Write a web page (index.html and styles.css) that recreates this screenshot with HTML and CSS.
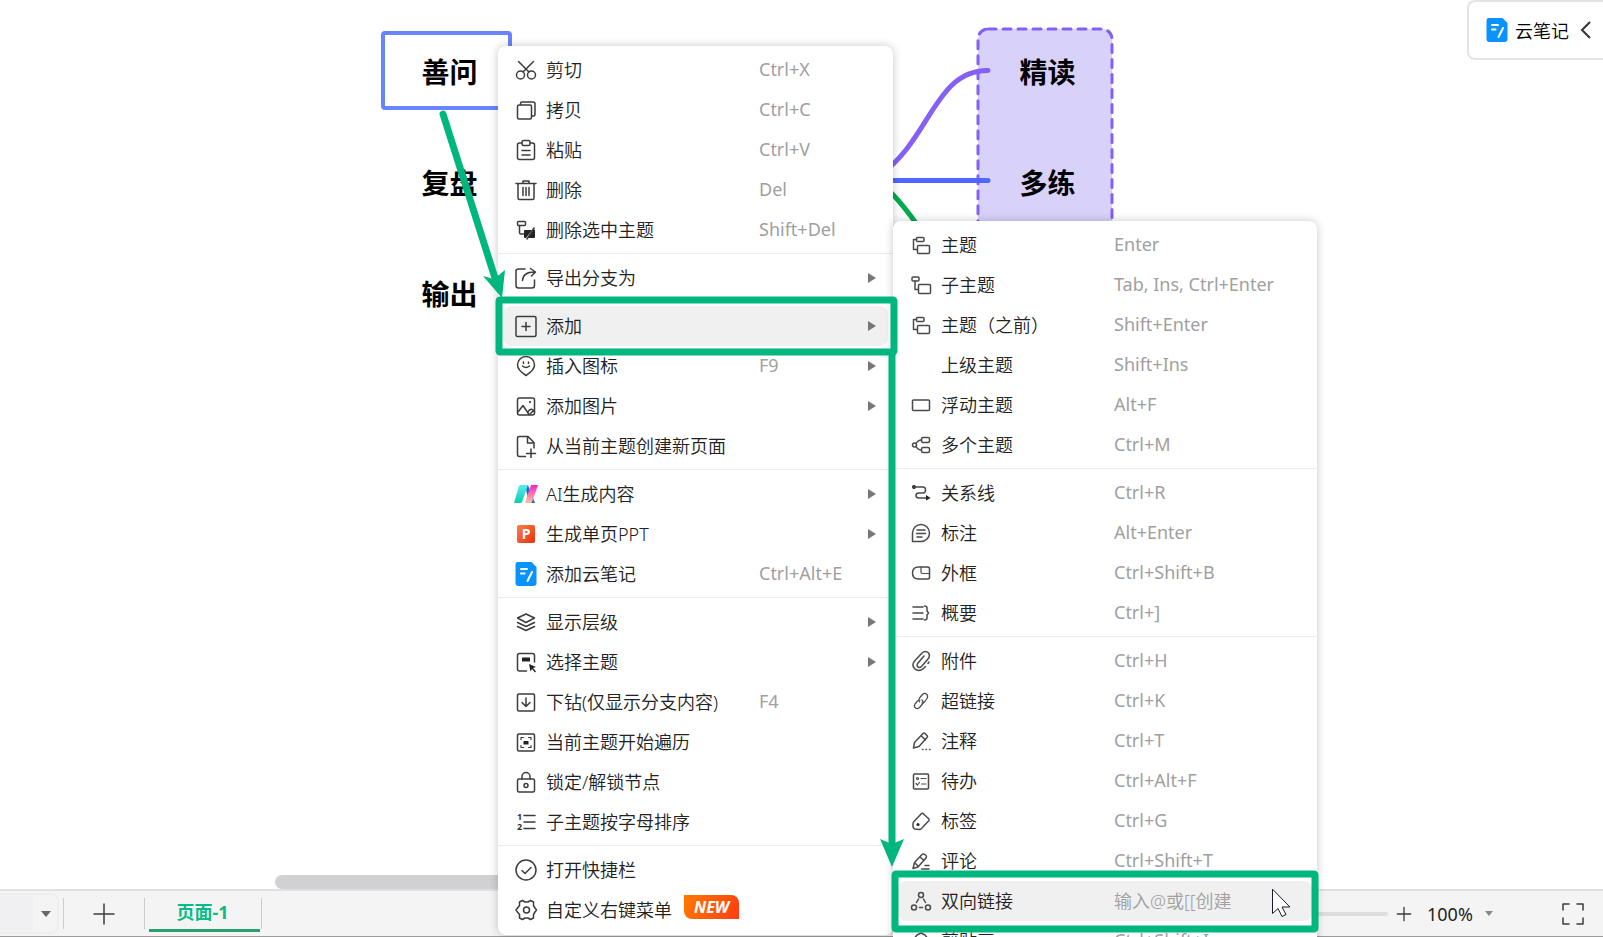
FILE: index.html
```html
<!DOCTYPE html>
<html lang="zh-CN">
<head>
    <meta charset="UTF-8">
    <meta name="viewport" content="width=device-width, initial-scale=1.0">
    <title>思维导图</title>
    <link rel="stylesheet" href="styles.css">
</head>
<body>
    <!-- Iconos -->
    <svg class="sprite" aria-hidden="true">
        <symbol id="i-cut" viewBox="0 0 24 24"><circle cx="6.500" cy="17" r="4"/><circle cx="17.500" cy="17" r="4"/><path d="M4.500 3.500L15 14M19.500 3.500L9 14"/></symbol>
        <symbol id="i-copy" viewBox="0 0 24 24"><rect x="3.500" y="7" width="14" height="14" rx="1.500"/><path d="M6.500 6.500V5.500q0-1.500 1.500-1.500h11q2 0 2 2v10.500q0 1.500-1.500 1.500h-1.500"/></symbol>
        <symbol id="i-paste" viewBox="0 0 24 24"><path d="M8 5H5.500q-2 0-2 2v12.500q0 2 2 2h13q2 0 2-2V7q0-2-2-2H16"/><rect x="8" y="2.500" width="8" height="5" rx="1.500"/><path d="M8 12.500h8M8 17h8"/></symbol>
        <symbol id="i-trash" viewBox="0 0 24 24"><path d="M2 5.500h20M4 5.500V20q0 1.500 1.500 1.500h13q1.500 0 1.500-1.500V5.500M9 5.500V3h6v2.500M9 9.500v8M12 9.500v8M15 9.500v8"/></symbol>
        <symbol id="i-deltopic" viewBox="0 0 24 24"><rect x="3.500" y="3.500" width="8" height="4" rx="1"/><path d="M5.500 7.500v7q0 1.500 1.500 1.500h3"/><path class="solid" d="M11 12h7l-6 8h-1q-1 0-1-1v-6q0-1 1-1zM20 11l-6 9h6q1 0 1-1v-7z"/><path d="M13 21l7-11"/></symbol>
        <symbol id="i-export" viewBox="0 0 24 24"><path d="M11 3H4.500Q2 3 2 5v14.500Q2 22 4.500 22H18q2.500 0 2.500-2.500V14M8.500 14.500Q9 6 20.500 6M16.500 2.500L21.500 6l-4 4"/></symbol>
        <symbol id="i-add" viewBox="0 0 24 24"><rect x="2" y="2.500" width="20" height="20" rx="1.500"/><path d="M12 8.500v8M8 12.500h8"/></symbol>
        <symbol id="i-marker" viewBox="0 0 24 24"><path d="M12 21.500Q3.500 16 3.500 11a8.500 8.500 0 0 1 17 0q0 5-8.500 10.500z"/><path d="M9.500 8v1.500M14.500 8v1.500M8.500 12q3.500 3 7 0"/></symbol>
        <symbol id="i-image" viewBox="0 0 24 24"><rect x="3.500" y="4" width="17" height="17" rx="2"/><path d="M4 18l5-6.500 6 9M14 18q2-4 5-2l1.500 2M16 20l3-3"/><circle class="solid" cx="16" cy="8" r="1"/></symbol>
        <symbol id="i-newpage" viewBox="0 0 24 24"><path d="M11.500 22.500H5.500q-2 0-2-2V4q0-1.500 2-1.500H14l6 6V14M13.500 3v6h6M17 15v9M12.500 19.500h9"/></symbol>
        <symbol id="i-ai" viewBox="0 0 24 24"><path fill="#1673c8" stroke="none" d="M11 3h3l7 18h-6z"/><path fill="url(#g-teal)" stroke="none" d="M6 3h8L8 20q-.5 1-2 1H0L5 4z"/><path fill="url(#g-pink)" stroke="none" d="M17 3h7l-6 17q-.5 1-2 1h-5z"/></symbol>
        <symbol id="i-note" viewBox="0 0 24 24"><path fill="#0a93ff" stroke="none" d="M3.500 0h14L22.500 5v16q0 3-3 3H4.500q-3 0-3-3V3q0-3 2-3z"/><path class="white" d="M7 7h6M7 11.500h3.500M18 10L13.500 19"/></symbol>
        <symbol id="i-layers" viewBox="0 0 24 24"><path d="M12 4l8.500 4-8.500 4.500L3.500 8zM3.500 12.500l8.500 4 8.500-4M3.500 16.500l8.500 4 8.500-4"/></symbol>
        <symbol id="i-select" viewBox="0 0 24 24"><path d="M12.500 21H5.500q-2 0-2-2V5.500q0-2 2-2h13q2 0 2 2V12"/><path class="solid" d="M8 7.500h8v4H8zM15 14l7 3-3 1 3 3.500-1 1-3-3.500-1.500 2.500z"/></symbol>
        <symbol id="i-drill" viewBox="0 0 24 24"><rect x="3.500" y="4" width="17" height="17" rx="1.500"/><path d="M12 8v8.500M8 12.500l4 4 4-4"/></symbol>
        <symbol id="i-walk" viewBox="0 0 24 24"><rect x="3.500" y="4" width="17" height="17" rx="1.500"/><path class="thin" d="M7 9.500V7.500h2.500M17 9.500V7.500h-2.500M7 15.500v2h2.500M17 15.500v2h-2.500"/><path class="solid" d="M9.500 11h5v3.500h-5z"/></symbol>
        <symbol id="i-lock" viewBox="0 0 24 24"><rect x="3.500" y="9" width="17" height="13" rx="1.500"/><path d="M8 9V6.500a4 4 0 0 1 8 0V9"/><circle cx="12" cy="15.500" r="2"/></symbol>
        <symbol id="i-check" viewBox="0 0 24 24"><circle cx="12" cy="12" r="10"/><path d="M8 12.500l3 3 6-6"/></symbol>
        <symbol id="i-gear" viewBox="0 0 24 24"><path d="M8.500 2.500l2.500 1.500h3l2.500-1.500 3 1.500v3.500l1.500 2.500 1.500 2-1.500 2-1.500 2.500V20l-3 1.500-2.500-1.500h-3l-2.500 1.500-3-1.500v-3.500L3.500 14 2 12l1.500-2L5.500 7.500V4z"/><circle cx="12.500" cy="12" r="3"/></symbol>
        <symbol id="i-topic" viewBox="0 0 24 24"><path d="M7.500 6.500H4.500v10H8"/><rect x="7.500" y="4.500" width="7.500" height="4" rx="1"/><rect x="8.500" y="12.500" width="12" height="8" rx="1"/></symbol>
        <symbol id="i-subtopic" viewBox="0 0 24 24"><rect x="3" y="4" width="7" height="4" rx="1"/><path d="M6 8v8.500h3"/><rect x="9.500" y="11.500" width="12" height="9" rx="1"/></symbol>
        <symbol id="i-float" viewBox="0 0 24 24"><rect x="3.500" y="7" width="17" height="10.500" rx="1"/></symbol>
        <symbol id="i-multi" viewBox="0 0 24 24"><circle cx="5.500" cy="12" r="2"/><rect x="12.500" y="4.500" width="8" height="5" rx="1.500"/><rect x="12.500" y="14.500" width="8" height="5" rx="1.500"/><path d="M7 10.500Q9 7 12.500 7M7 13.500Q9 17 12.500 17"/></symbol>
        <symbol id="i-relation" viewBox="0 0 24 24"><circle class="solid" cx="5" cy="6" r="2"/><path d="M4.500 6H14q2.500 0 2.500 3t-2.500 3H10q-3 0-3 2.500T10 17h9"/><path class="solid" d="M17 14l4.500 3-4.500 2.500z"/></symbol>
        <symbol id="i-callout" viewBox="0 0 24 24"><path d="M3.500 20.500V12a8.500 8.500 0 1 1 8.500 8.500zM8 9h8M7.500 12.500h9M8 16h5"/></symbol>
        <symbol id="i-boundary" viewBox="0 0 24 24"><path d="M9.500 6H18q2.500 0 2.500 1.500v9q0 1.500-2.500 1.500H9.500q-6 0-6-6t6-6z"/><path class="thin" d="M12 6v5q0 1.500 1.500 1.500h7"/></symbol>
        <symbol id="i-summary" viewBox="0 0 24 24"><path d="M4 6h10M4 12h10M4 18h10M15.500 5q2.500 0 2.500 2v3l1.500 2-1.500 2v3q0 2-2.500 2"/></symbol>
        <symbol id="i-clip" viewBox="0 0 24 24"><path d="M20 13l-1 1.500M16.500 17.500l-2 2q-5 4-9 0-3.500-4 .5-8l7-7.500q3.500-3 6.500 0 2 3-.500 6l-6.500 7.500q-2 2-4 0-1-1.500.5-3.500l6-7"/></symbol>
        <symbol id="i-link" viewBox="0 0 24 24"><path class="thin" d="M10.500 13q-1.500-2 0-4l3-3.500q2-2 4-.5t.500 4.500l-2.500 3.500q-1 1-2.500 1"/><path class="thin" d="M13 11q2 2 .5 4l-3 3.500q-2 2-4 .5t-.5-4l2.500-3q1-1 2.500-1"/></symbol>
        <symbol id="i-pen" viewBox="0 0 24 24"><path d="M4.500 19l1-5.500 8.500-9q1-1 2 0l2 2q1 1 0 2L10 17.500zM12.500 7l4 4M13.500 20.500h.5M17 20.500h.5M20.500 20.500h.5"/></symbol>
        <symbol id="i-todo" viewBox="0 0 24 24"><rect x="4.500" y="5" width="15" height="15" rx="1"/><circle class="thin" cx="8.500" cy="9.500" r="1"/><path class="thin" d="M12 9.500h5M7 14.500l1.500 1.500 2-2.500M12.500 15H17"/></symbol>
        <symbol id="i-tag" viewBox="0 0 24 24"><path d="M14 4.500l6 5.500q.5 1-.5 2L12.500 19.500q-1 1-2 1L6 20q-1.500-.5-2-2v-3q0-1 .5-2l8-8.500q.5-.5 1.500 0z"/><circle class="solid" cx="9" cy="15.500" r="1.500"/></symbol>
        <symbol id="i-comment" viewBox="0 0 24 24"><path d="M4 19.500l1.500-6L13 5.500q1.500-1 3.500.5t0 3.500L9 18zM11 8l4 3.500M5.500 13.500l3.500 3.500M16 16.500h4M12.500 20h7.500"/></symbol>
        <symbol id="i-bilink" viewBox="0 0 24 24"><circle cx="12" cy="6" r="2.500"/><circle cx="5" cy="18.500" r="2.500"/><circle cx="19" cy="18.500" r="2.500"/><path d="M9.500 10L7.500 13.500M14.500 10l2 3.500M10.500 18.500h3"/></symbol>
        <symbol id="i-clipart" viewBox="0 0 24 24"><path d="M4 11l4-5 4-2 4 2 4 5-4 2v7H8v-7z"/></symbol>
        <symbol id="i-plus" viewBox="0 0 24 24"><path d="M12 2v20M2 12h20"/></symbol>
        <symbol id="i-full" viewBox="0 0 24 24"><path d="M2 8V2h6M16 2h6v6M2 16v6h6M16 22h6v-6"/></symbol>
        <linearGradient id="g-teal" x1="0" y1="0" x2="0" y2="1"><stop offset="0" stop-color="#5cebf2"/><stop offset="1" stop-color="#06cfa9"/></linearGradient>
        <linearGradient id="g-pink" x1="0" y1="0" x2="0" y2="1"><stop offset="0" stop-color="#ff1fc7"/><stop offset="1" stop-color="#ffc59a"/></linearGradient>
        <linearGradient id="g-ppt" x1="0" y1="0" x2="1" y2="1"><stop offset="0" stop-color="#ff7d4d"/><stop offset="1" stop-color="#e73208"/></linearGradient>
    </svg>

    <main class="canvas">
        <svg class="wires" aria-hidden="true">
            <rect x="978" y="29" width="134" height="300" rx="10" fill="#d8d1f9" stroke="#8560f5" stroke-width="3" stroke-dasharray="8 7" stroke-linecap="round"/>
            <path d="M880 175C930 140 935 70 988 70.500" stroke="#8560f5"/>
            <path d="M880 180.500H988" stroke="#4f66ff"/>
            <path d="M880 184Q895 192 925 236" stroke="#00aa4f"/>
        </svg>
        <div class="topics topics-left">
            <div class="topic selected">善问</div>
            <div class="topic">复盘</div>
            <div class="topic">输出</div>
        </div>
        <div class="topics topics-right">
            <div class="topic">精读</div>
            <div class="topic">多练</div>
        </div>
        <button class="cloud-note"><svg class="icon"><use href="#i-note"/></svg><span>云笔记</span><svg class="chevron" viewBox="0 0 10 16"><path d="M9 0L1 8l8 8"/></svg></button>
        <div class="scrollbar"></div>
    </main>

    <footer class="statusbar">
        <button class="page-list" aria-label="页面列表"><span class="page-list-fill"></span><span class="caret"></span></button>
        <button class="page-add" aria-label="新建页面"><svg class="icon"><use href="#i-plus"/></svg></button>
        <button class="page-tab"><span>页面-1</span></button>
        <div class="zoom">
            <input class="zoom-range" type="range" min="0" max="100" value="20" aria-label="缩放">
            <button class="zoom-in" aria-label="放大"><svg class="icon"><use href="#i-plus"/></svg></button>
            <select class="zoom-select" aria-label="缩放比例"><option>100%</option></select>
            <span class="caret caret-small"></span>
            <button class="fullscreen" aria-label="全屏"><svg class="icon"><use href="#i-full"/></svg></button>
        </div>
    </footer>

    <!-- Menú contextual -->
    <nav class="menu menu-main">
        <button class="item"><svg class="icon"><use href="#i-cut"/></svg><span class="label">剪切</span><kbd>Ctrl+X</kbd></button>
        <button class="item"><svg class="icon"><use href="#i-copy"/></svg><span class="label">拷贝</span><kbd>Ctrl+C</kbd></button>
        <button class="item"><svg class="icon"><use href="#i-paste"/></svg><span class="label">粘贴</span><kbd>Ctrl+V</kbd></button>
        <button class="item"><svg class="icon"><use href="#i-trash"/></svg><span class="label">删除</span><kbd>Del</kbd></button>
        <button class="item"><svg class="icon"><use href="#i-deltopic"/></svg><span class="label">删除选中主题</span><kbd>Shift+Del</kbd></button>
        <hr>
        <button class="item has-sub"><svg class="icon"><use href="#i-export"/></svg><span class="label">导出分支为</span></button>
        <hr>
        <button class="item has-sub active"><svg class="icon"><use href="#i-add"/></svg><span class="label">添加</span></button>
        <button class="item has-sub"><svg class="icon"><use href="#i-marker"/></svg><span class="label">插入图标</span><kbd>F9</kbd></button>
        <button class="item has-sub"><svg class="icon"><use href="#i-image"/></svg><span class="label">添加图片</span></button>
        <button class="item"><svg class="icon"><use href="#i-newpage"/></svg><span class="label">从当前主题创建新页面</span></button>
        <hr>
        <button class="item has-sub"><svg class="icon"><use href="#i-ai"/></svg><span class="label">AI生成内容</span></button>
        <button class="item has-sub"><svg class="icon" viewBox="0 0 24 24"><rect x="3" y="3" width="18" height="18" rx="2" fill="url(#g-ppt)" stroke="none"/><text class="ppt-letter" x="12" y="17" text-anchor="middle">P</text></svg><span class="label">生成单页PPT</span></button>
        <button class="item"><svg class="icon"><use href="#i-note"/></svg><span class="label">添加云笔记</span><kbd>Ctrl+Alt+E</kbd></button>
        <hr>
        <button class="item has-sub"><svg class="icon"><use href="#i-layers"/></svg><span class="label">显示层级</span></button>
        <button class="item has-sub"><svg class="icon"><use href="#i-select"/></svg><span class="label">选择主题</span></button>
        <button class="item"><svg class="icon"><use href="#i-drill"/></svg><span class="label">下钻(仅显示分支内容)</span><kbd>F4</kbd></button>
        <button class="item"><svg class="icon"><use href="#i-walk"/></svg><span class="label">当前主题开始遍历</span></button>
        <button class="item"><svg class="icon"><use href="#i-lock"/></svg><span class="label">锁定/解锁节点</span></button>
        <button class="item"><svg class="icon" viewBox="0 0 24 24"><path d="M10 5.500h11M10 12h11M10 18.500h11"/><text class="sort-digit" x="3" y="10">1</text><text class="sort-digit" x="3" y="20">2</text></svg><span class="label">子主题按字母排序</span></button>
        <hr>
        <button class="item"><svg class="icon"><use href="#i-check"/></svg><span class="label">打开快捷栏</span></button>
        <button class="item"><svg class="icon"><use href="#i-gear"/></svg><span class="label">自定义右键菜单<b class="badge">NEW</b></span></button>
    </nav>

    <!-- Submenú "添加" -->
    <nav class="menu menu-sub">
        <button class="item"><svg class="icon"><use href="#i-topic"/></svg><span class="label">主题</span><kbd>Enter</kbd></button>
        <button class="item"><svg class="icon"><use href="#i-subtopic"/></svg><span class="label">子主题</span><kbd>Tab, Ins, Ctrl+Enter</kbd></button>
        <button class="item"><svg class="icon"><use href="#i-topic"/></svg><span class="label">主题（之前）</span><kbd>Shift+Enter</kbd></button>
        <button class="item"><span class="icon"></span><span class="label">上级主题</span><kbd>Shift+Ins</kbd></button>
        <button class="item"><svg class="icon"><use href="#i-float"/></svg><span class="label">浮动主题</span><kbd>Alt+F</kbd></button>
        <button class="item"><svg class="icon"><use href="#i-multi"/></svg><span class="label">多个主题</span><kbd>Ctrl+M</kbd></button>
        <hr>
        <button class="item"><svg class="icon"><use href="#i-relation"/></svg><span class="label">关系线</span><kbd>Ctrl+R</kbd></button>
        <button class="item"><svg class="icon"><use href="#i-callout"/></svg><span class="label">标注</span><kbd>Alt+Enter</kbd></button>
        <button class="item"><svg class="icon"><use href="#i-boundary"/></svg><span class="label">外框</span><kbd>Ctrl+Shift+B</kbd></button>
        <button class="item"><svg class="icon"><use href="#i-summary"/></svg><span class="label">概要</span><kbd>Ctrl+]</kbd></button>
        <hr>
        <button class="item"><svg class="icon"><use href="#i-clip"/></svg><span class="label">附件</span><kbd>Ctrl+H</kbd></button>
        <button class="item"><svg class="icon"><use href="#i-link"/></svg><span class="label">超链接</span><kbd>Ctrl+K</kbd></button>
        <button class="item"><svg class="icon"><use href="#i-pen"/></svg><span class="label">注释</span><kbd>Ctrl+T</kbd></button>
        <button class="item"><svg class="icon"><use href="#i-todo"/></svg><span class="label">待办</span><kbd>Ctrl+Alt+F</kbd></button>
        <button class="item"><svg class="icon"><use href="#i-tag"/></svg><span class="label">标签</span><kbd>Ctrl+G</kbd></button>
        <button class="item"><svg class="icon"><use href="#i-comment"/></svg><span class="label">评论</span><kbd>Ctrl+Shift+T</kbd></button>
        <button class="item active"><svg class="icon"><use href="#i-bilink"/></svg><span class="label">双向链接</span><kbd>输入@或[[创建</kbd></button>
        <button class="item"><svg class="icon"><use href="#i-clipart"/></svg><span class="label">剪贴画</span><kbd>Ctrl+Shift+I</kbd></button>
    </nav>

    <!-- Marcas verdes y cursor -->
    <svg class="marks" aria-hidden="true">
        <rect x="499" y="300" width="395" height="52" rx="1"/>
        <rect x="895" y="874" width="420" height="55" rx="1"/>
        <path d="M443 114L495 278M892 354V845"/>
        <path class="head" d="M483 276l11 3 11-9-3 28zM880 839l12 5 12-5-12 28z"/>
        <path class="cursor" d="M1272.500 889.500v24l5.500-5 4 8 4-2-4-7.500h7.500z"/>
    </svg>
</body>
</html>
```
FILE: styles.css
```css
* {
    box-sizing: border-box;
}
body {
    display: flex;
    flex-direction: column;
    height: 100vh;
    margin: 0;
    overflow: hidden;
    position: relative;
    background-color: #fff;
    color: #222;
    font-family: "Noto Sans", "Noto Sans CJK SC", sans-serif;
    font-size: 18px;
    font-weight: 350;
}
button, select {
    margin: 0;
    padding: 0;
    border: none;
    background: none;
    color: inherit;
    font: inherit;
}
.sprite {
    position: absolute;
    width: 0;
    height: 0;
}
.icon {
    flex: none;
    width: 24px;
    height: 24px;
    fill: none;
    stroke: #3c3c3c;
    stroke-width: 1.5;
    stroke-linecap: round;
    stroke-linejoin: round;
}
.solid {
    fill: #222;
    stroke: none;
}
.thin {
    stroke-width: 1.2;
}
.white {
    stroke: #fff;
    stroke-width: 2;
}
.ppt-letter {
    fill: #fff;
    stroke: none;
    font-size: 14px;
    font-weight: 700;
}
.sort-digit {
    fill: #333;
    stroke: none;
    font-size: 9px;
    font-weight: 700;
}

/* Lienzo */
.canvas {
    flex: 1;
    position: relative;
    display: flex;
    flex-direction: column;
    justify-content: space-between;
    align-items: flex-end;
}
.wires, .marks {
    position: absolute;
    top: 0;
    left: 0;
    width: 100%;
    height: 100%;
    fill: none;
    stroke-width: 5;
    stroke-linecap: round;
    pointer-events: none;
}
.topics {
    position: absolute;
    top: 31px;
    display: flex;
    flex-direction: column;
    gap: 32px;
}
.topics-left {
    left: 381px;
}
.topics-right {
    left: 979px;
}
.topic {
    width: 131px;
    height: 79px;
    padding: 0 4px 0 10px;
    border: 4px solid transparent;
    border-radius: 4px;
    color: #000;
    font-size: 28px;
    font-weight: 700;
    line-height: 74px;
    text-align: center;
}
.selected {
    border-color: #6984ff;
}
.cloud-note {
    position: relative;
    display: flex;
    align-items: center;
    gap: 6px;
    height: 60px;
    padding: 0 12px 0 16px;
    border: 2px solid #e4e4e4;
    border-right: none;
    border-radius: 8px 0 0 8px;
    background-color: #fff;
    color: #000;
}
.chevron {
    width: 10px;
    height: 16px;
    margin-left: 6px;
    overflow: visible;
    fill: none;
    stroke: #333;
    stroke-width: 2;
}
.scrollbar {
    align-self: stretch;
    height: 14px;
    margin: 0 300px 0 275px;
    border-radius: 7px;
    background-color: #d1d1d3;
}

/* Barra inferior */
.statusbar {
    display: flex;
    align-items: center;
    height: 48px;
    border-top: 2px solid #e0e0e0;
    border-bottom: 1px solid #9c9c9c;
    background-color: #f4f4f4;
}
.page-list {
    display: flex;
    align-items: center;
    gap: 8px;
    width: 59px;
    height: 41px;
    margin-right: 4px;
    border: 2px solid #eee;
    border-left: none;
    border-radius: 0 8px 8px 0;
}
.page-list-fill {
    width: 33px;
    height: 35px;
    background-color: #f0f0f2;
}
.caret {
    border: 5px solid transparent;
    border-top: 6px solid #666;
    border-bottom: none;
}
.caret-small {
    border-width: 5px 4px 0;
    border-top-color: #888;
}
.page-add {
    display: flex;
    align-items: center;
    justify-content: center;
    width: 82px;
    height: 31px;
    border-right: 1px solid #ccc;
    border-left: 1px solid #ccc;
}
.page-tab {
    width: 117px;
    height: 31px;
    padding: 0 1px 0 4px;
    border-right: 1px solid #ccc;
    color: #08bb87;
    font-weight: 700;
    line-height: 29px;
}
.page-tab span {
    display: block;
    height: 31px;
    padding-right: 4px;
    box-shadow: 0 3px #2a9f70;
}
.zoom {
    display: flex;
    align-items: center;
    margin-left: auto;
    padding-right: 18px;
}
.zoom-range {
    width: 150px;
    height: 4px;
    margin: 0 8px 0 0;
    border-radius: 2px;
    background-color: #ddd;
    appearance: none;
}
.zoom-in {
    display: flex;
    margin-right: 15px;
}
.zoom-in .icon {
    width: 16px;
    height: 16px;
    stroke-width: 2;
}
.zoom-select {
    width: 50px;
    margin-right: 8px;
    font-weight: 400;
    appearance: none;
}
.fullscreen {
    display: flex;
    margin-left: 68px;
}

/* Menús */
.menu {
    position: absolute;
    padding: 4px 0 5px;
    border-radius: 8px;
    background-color: #fff;
    box-shadow: 0 0 10px rgba(0, 0, 0, 0.22);
}
.menu-main {
    top: 46px;
    left: 498px;
    width: 395px;
}
.menu-sub {
    top: 221px;
    left: 893px;
    width: 424px;
}
.menu-sub .icon {
    stroke: #4a4a4a;
}
.menu hr {
    height: 1px;
    margin: 3px 0 4px;
    border: none;
    background-color: #ebebeb;
}
.item {
    display: flex;
    align-items: center;
    gap: 8px;
    width: calc(100% - 10px);
    height: 40px;
    margin: 0 5px;
    padding: 0 12px 0 11px;
    border-radius: 8px;
    text-align: left;
    white-space: nowrap;
}
.active {
    background-color: #f0f0f0;
}
.label {
    display: flex;
    align-items: center;
    flex: none;
    gap: 12px;
    width: 205px;
    padding-bottom: 2px;
}
.menu-sub .label {
    width: 165px;
}
kbd {
    padding-bottom: 2px;
    color: #a0a0a0;
    font: inherit;
    font-weight: 400;
}
.active kbd {
    font-weight: 350;
}
.has-sub::after {
    content: "";
    margin-left: auto;
    border: 5px solid transparent;
    border-left: 8px solid #777;
    border-right: none;
}
.badge {
    height: 24px;
    margin-bottom: 4px;
    padding: 0 10px;
    border-radius: 0 8px;
    background: linear-gradient(110deg, #ff7a00, #ff3d12);
    color: #fff;
    font-size: 16px;
    font-style: italic;
    font-weight: 700;
    line-height: 24px;
}

/* Marcas */
.marks {
    stroke: #00b67f;
    stroke-width: 7;
}
.marks .head {
    fill: #00b67f;
    stroke: none;
}
.marks .cursor {
    fill: #fff;
    stroke: #1c1c28;
    stroke-width: 1;
}
```
